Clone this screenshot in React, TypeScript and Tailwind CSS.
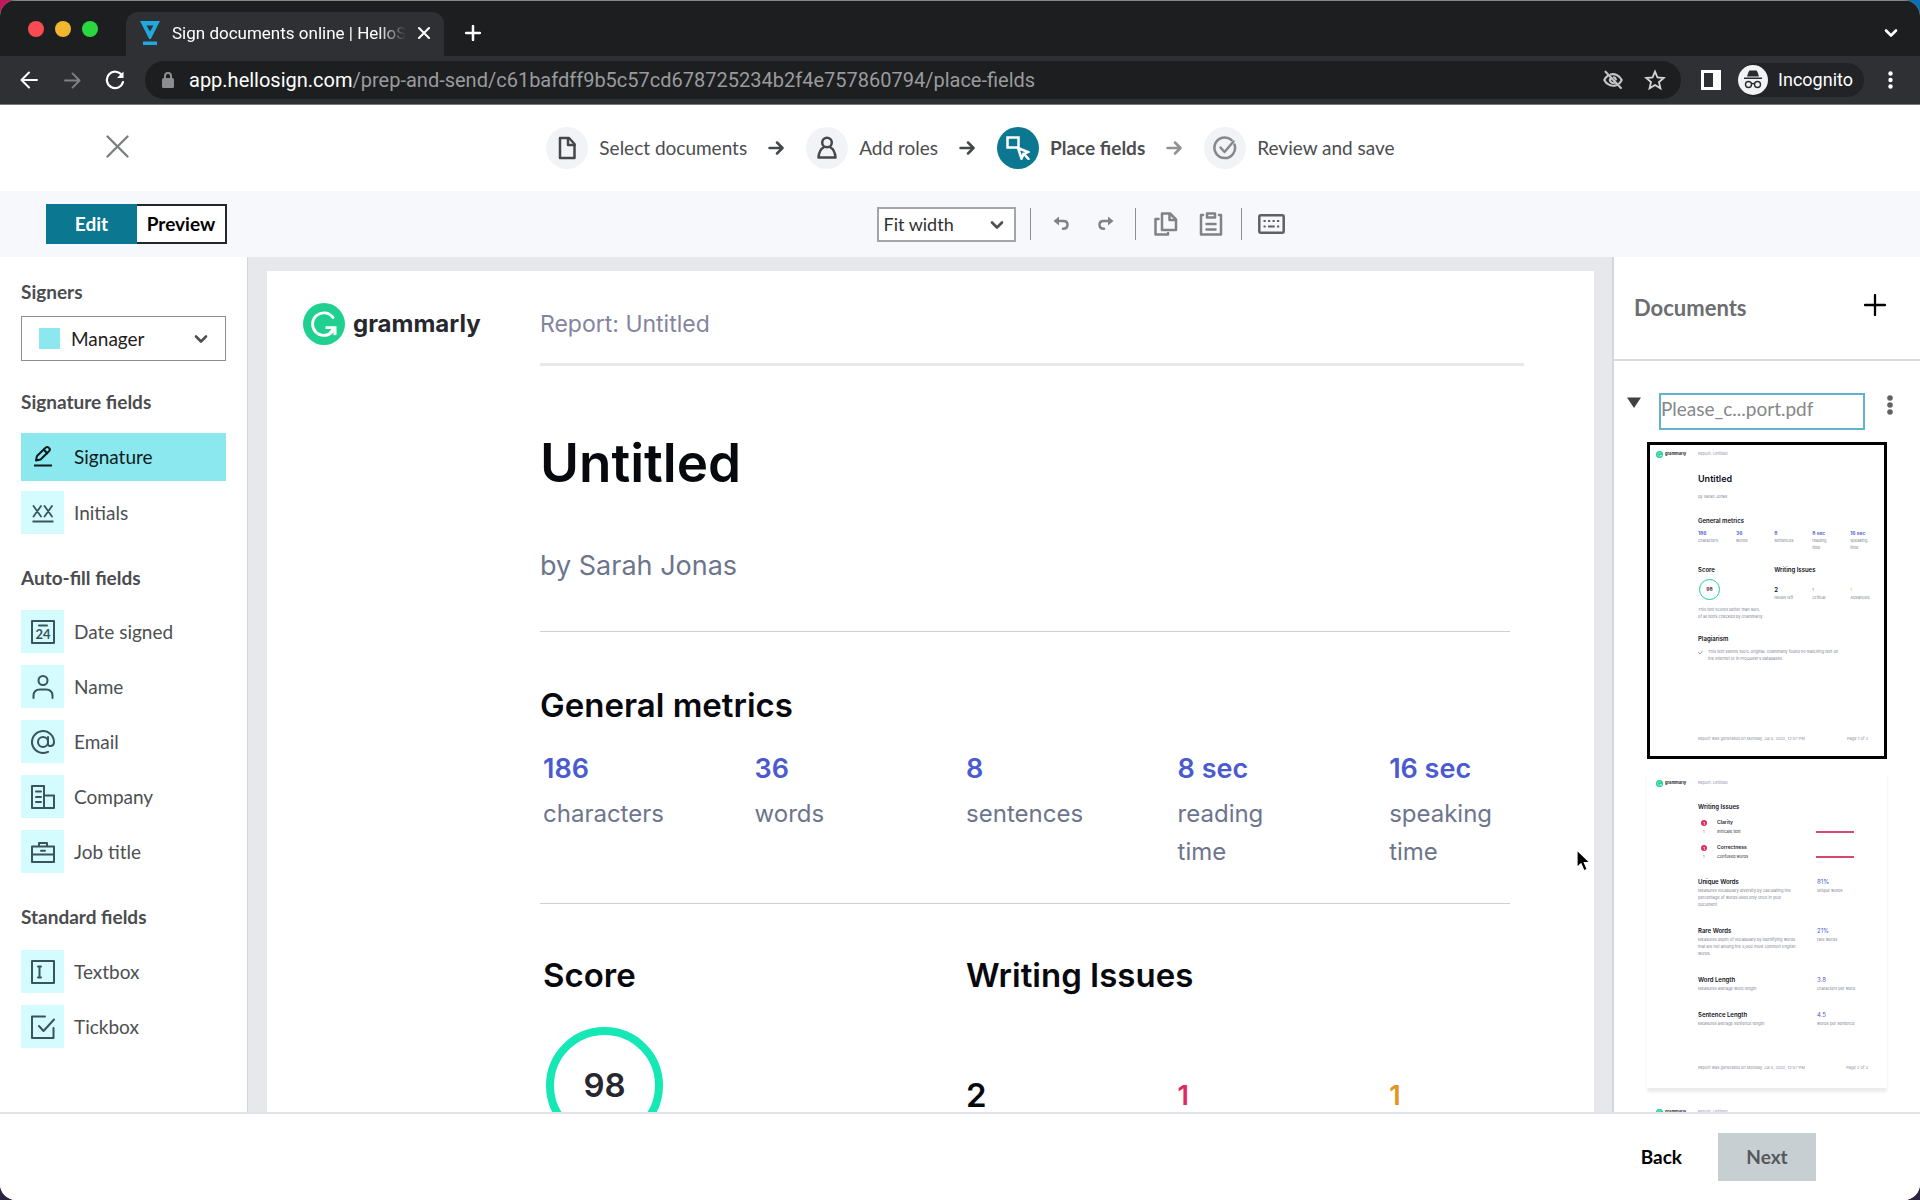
import type { ReactNode } from "react";

/* ---------- icons ---------- */

type SvgProps = {
  size?: number;
  box?: number;
  stroke?: number;
  className?: string;
  children: ReactNode;
};

function Svg({ size = 24, box = 24, stroke = 2, className = "", children }: SvgProps) {
  return (
    <svg
      width={size}
      height={size}
      viewBox={`0 0 ${box} ${box}`}
      fill="none"
      stroke="currentColor"
      strokeWidth={stroke}
      strokeLinecap="round"
      strokeLinejoin="round"
      className={`shrink-0 ${className}`}
      aria-hidden="true"
    >
      {children}
    </svg>
  );
}

const SignatureIcon = () => (
  <Svg stroke={2}>
    <path d="M3 20.5h18" strokeLinecap="butt" />
    <path d="M5 15.5l1-4.6L14.8 2.6c.9-.8 2-.8 2.8 0l.6.6c.9.9.8 2 0 2.800L9.600 14.500z" />
    <path d="M12.800 4.800l3.400 3.400" />
  </Svg>
);

const InitialsIcon = () => (
  <Svg stroke={2}>
    <path d="M1.500 20.500h21" strokeLinecap="butt" />
    <path d="M2.500 5l7.500 10.500M10 5L2.500 15.500M13.500 5l7.500 10.500M21 5l-7.500 10.500" strokeWidth="1.800" />
  </Svg>
);

const DateIcon = () => (
  <Svg stroke={2}>
    <rect x="1" y="1" width="22" height="22" />
    <path d="M8 5.500h8" />
    <text x="12" y="19" textAnchor="middle" fontSize="13" fontWeight="700" fontFamily="Lato" fill="currentColor" stroke="none">
      24
    </text>
  </Svg>
);

const NameIcon = () => (
  <Svg>
    <circle cx="12" cy="5.500" r="4.500" />
    <path d="M2.500 23v-2c0-4 2.500-6.500 6.500-6.500h6c4 0 6.500 2.500 6.500 6.500v2" />
  </Svg>
);

const EmailIcon = () => (
  <Svg>
    <circle cx="12" cy="12" r="5" />
    <path d="M17 7v7c0 3 6 3 6-2A11 11 0 1 0 17 21.800" />
  </Svg>
);

const CompanyIcon = () => (
  <Svg>
    <path d="M1 1h12v22H1zM13 10.500h10V23H13" />
    <path d="M5 6.500h5M5 12h5M5 17h5" />
  </Svg>
);

const JobIcon = () => (
  <Svg>
    <path d="M1 6.500h22v15.500H1zM1 14.500h22M8 6V3h8v3M10 10.800h4" />
  </Svg>
);

const TextboxIcon = () => (
  <Svg>
    <rect x="1" y="1" width="22" height="22" />
    <path d="M8.500 7v10M7 6.500h3M7 17.500h3" />
  </Svg>
);

const TickboxIcon = () => (
  <Svg>
    <path d="M14 1.500H1V23h21.500V13" />
    <path d="M8 11l4.500 5L23 4.500" />
  </Svg>
);

const ArrowRight = ({ className = "" }) => (
  <Svg size={16} box={16} stroke={2.500} className={className}>
    <path d="M1.500 8h13M9 2.500L14.500 8 9 13.500" />
  </Svg>
);

const ChevronDown = ({ size = 14, className = "" }) => (
  <Svg size={size} box={14} stroke={2.600} className={className}>
    <path d="M2 4.500l5 5 5-5" />
  </Svg>
);

function GrammarlyMark({ className = "" }) {
  return (
    <svg viewBox="0 0 42 42" className={`shrink-0 ${className}`} aria-hidden="true">
      <circle cx="21" cy="21" r="21" fill="#1fd091" />
      <path
        d="M30 14.500A11.300 11.300 0 1 0 29 29"
        fill="none"
        stroke="#fff"
        strokeWidth="2.800"
        strokeLinecap="round"
      />
      <path d="M22.500 23.300h11v8.800l-3 .2v-3.400l-3.600 3.200-1.800-2 3.500-4h-6.100z" fill="#fff" />
    </svg>
  );
}

/* ---------- browser chrome ---------- */

function BrowserChrome() {
  return (
    <div className="border-t border-[#85878a] bg-[#1d1e20] font-['Roboto',sans-serif] text-white">
      <div className="flex h-[55px] items-center pr-[22px] pl-7">
        <div className="flex gap-[11px]">
          <span className="h-4 w-4 rounded-full bg-[#fb4b52]" />
          <span className="h-4 w-4 rounded-full bg-[#f3b62f]" />
          <span className="h-4 w-4 rounded-full bg-[#2bd741]" />
        </div>
        <div className="ml-7 flex h-[44px] w-[318px] items-center self-end rounded-t-xl bg-[#2f3034] px-[14px] pb-[2px]">
          <svg width="20" height="24" viewBox="0 0 20 24" className="shrink-0" aria-hidden="true">
            <path d="M0 0h20L10.800 18h-1.600zM6.500 4.500L10 10.500l3.500-6z" fill="#20a9dc" fillRule="evenodd" />
            <path d="M3 20.500h14v3.500H3z" fill="#20a9dc" />
          </svg>
          <span className="ml-3 flex-1 overflow-hidden text-[17px] leading-6 whitespace-nowrap [mask-image:linear-gradient(to_right,#000_88%,transparent)]">
            Sign documents online | HelloSign
          </span>
          <button type="button" aria-label="Close tab" className="ml-3">
            <Svg size={12} box={12}>
              <path d="M1 1l10 10M11 1L1 11" />
            </Svg>
          </button>
        </div>
        <button type="button" aria-label="New tab" className="mt-2 ml-[21px]">
          <Svg size={16} box={16} stroke={2.500}>
            <path d="M8 1v14M1 8h14" />
          </Svg>
        </button>
        <button type="button" aria-label="Search tabs" className="mt-2 ml-auto">
          <ChevronDown />
        </button>
      </div>

      <div className="flex h-[49px] items-center border-b border-[#77787b] bg-[#2f3034] pr-[27px] pl-5">
        <button type="button" aria-label="Back in history">
          <Svg size={18} box={18}>
            <path d="M17 9H2M9 1.500L1.500 9 9 16.500" />
          </Svg>
        </button>
        <button type="button" aria-label="Forward in history" className="ml-[26px] text-[#7e8083]">
          <Svg size={17} box={18}>
            <path d="M1 9h15M9 1.500L16.500 9 9 16.500" />
          </Svg>
        </button>
        <button type="button" aria-label="Reload" className="ml-6">
          <Svg size={20} box={20} stroke={2.200}>
            <path d="M17 5.500A8.200 8.200 0 1 0 18 12" />
            <path d="M18.500 1.500v6.500h-6.500z" fill="currentColor" stroke="none" />
          </Svg>
        </button>
        <div className="ml-5 flex h-[38px] flex-1 items-center rounded-full bg-[#1d1e20] pr-4 pl-[17px]">
          <svg width="12" height="16" viewBox="0 0 12 16" className="shrink-0" aria-hidden="true">
            <rect y="6" width="12" height="10" rx="1.500" fill="#8b8d90" />
            <path d="M3 6V4a3 3 0 0 1 6 0v2" fill="none" stroke="#8b8d90" strokeWidth="2" />
          </svg>
          <span className="ml-[15px] text-xl leading-6 whitespace-nowrap">
            app.hellosign.com
            <span className="text-[#9a9b9e]">
              /prep-and-send/c61bafdff9b5c57cd678725234b2f4e757860794/place-fields
            </span>
          </span>
          <button type="button" aria-label="Third-party cookies blocked" className="ml-auto text-[#c4c6c9]">
            <Svg size={20} stroke={2.500}>
              <path d="M9 5.300A12 12 0 0 1 22.500 12a14 14 0 0 1-3.200 4.300M6 6.800A13 13 0 0 0 1.500 12 12 12 0 0 0 16 18.300" />
              <path d="M9.500 9.500a3.500 3.500 0 0 0 5 5M3 2l18.500 19.500M13 8.700a3.500 3.500 0 0 1 2.500 2.600" />
            </Svg>
          </button>
          <button type="button" aria-label="Bookmark this page" className="ml-[22px] text-[#d3d5d8]">
            <Svg size={20} stroke={2.200} className="overflow-visible">
              <path
                d="M12 2l3 7 7.500.6-5.700 5 1.700 7.400L12 18l-6.500 4 1.700-7.400-5.700-5L9 9z"
                strokeLinejoin="miter"
              />
            </Svg>
          </button>
        </div>
        <button type="button" aria-label="Side panel" className="ml-5">
          <Svg size={20} box={20} stroke={3}>
            <path d="M1.500 1.500h17v17h-17z" strokeLinejoin="miter" />
            <path d="M12 1h7v18h-7z" fill="currentColor" stroke="none" />
          </Svg>
        </button>
        <button type="button" className="ml-[17px] flex h-[34px] items-center rounded-full bg-[#222326] pr-[11px]">
          <svg width="30" height="30" viewBox="0 0 30 30" aria-hidden="true">
            <circle cx="15" cy="15" r="15" fill="#f1f3f4" />
            <path d="M10.500 7l1-1.500h7l1 1.500 1.500 4.500H9zM6 12.500h18v1.500H6z" fill="#2a2b2e" />
            <g fill="none" stroke="#2a2b2e" strokeWidth="1.400">
              <circle cx="10.500" cy="19.500" r="3" />
              <circle cx="19.500" cy="19.500" r="3" />
              <path d="M13.500 19c1-.7 2-.7 3 0" />
            </g>
          </svg>
          <span className="ml-[10px] text-[18px] leading-6">Incognito</span>
        </button>
        <button type="button" aria-label="Browser menu" className="ml-6">
          <svg width="5" height="18" viewBox="0 0 5 18" fill="#fff" aria-hidden="true">
            <circle cx="2.500" cy="2.500" r="2.200" />
            <circle cx="2.500" cy="9" r="2.200" />
            <circle cx="2.500" cy="15.500" r="2.200" />
          </svg>
        </button>
      </div>
    </div>
  );
}

/* ---------- wizard header ---------- */

const steps = [
  {
    label: "Select documents",
    icon: (
      <Svg stroke={2.500}>
        <path d="M5 2h9l5.500 6v14H5z" />
        <path d="M13 2.500V9h6.500" />
      </Svg>
    ),
  },
  {
    label: "Add roles",
    icon: (
      <Svg stroke={2.500}>
        <circle cx="12" cy="6.500" r="4.800" />
        <path d="M8.500 11.500C5.500 13 4 15.500 3.500 21.500h17c-.5-6-2-8.500-5-10" />
      </Svg>
    ),
  },
  {
    label: "Place fields",
    active: true,
    icon: (
      <Svg stroke={2.500}>
        <path d="M1.500 1.500h11v10h-11z" strokeLinejoin="miter" />
        <path d="M12 12l10 4-4.200 1.800L22.500 23M12 12l3.500 10.500 2.300-4.700" strokeLinejoin="miter" />
      </Svg>
    ),
  },
  {
    label: "Review and save",
    muted: true,
    icon: (
      <Svg stroke={2.500}>
        <path d="M21.500 8.500A10.300 10.300 0 1 1 18.500 4" />
        <path d="M7.500 11.500l4 4.500L20.500 5.500" />
      </Svg>
    ),
  },
];

function WizardHeader() {
  return (
    <header className="flex h-[86px] shrink-0 items-center bg-white pl-[106px]">
      <button type="button" aria-label="Close" className="mb-1 text-[#7b7d80]">
        <Svg size={23} box={23} stroke={2.300}>
          <path d="M1.500 1.500l20 20M21.500 1.500l-20 20" />
        </Svg>
      </button>
      <nav className="flex flex-1 justify-center pr-[108px]" aria-label="Progress">
        <ol className="flex items-center">
          {steps.map((step, i) => (
            <li key={step.label} className="flex items-center">
              {i > 0 && (
                <ArrowRight className={`mr-[22px] ml-[21px] ${step.muted ? "text-[#8f9194]" : "text-[#45474a]"}`} />
              )}
              <span
                className={`grid h-[42px] w-[42px] place-items-center rounded-full ${
                  step.active
                    ? "bg-[#0b7790] text-white"
                    : step.muted
                      ? "bg-[#f2f3f6] text-[#85878a]"
                      : "bg-[#f2f3f6] text-[#45474a]"
                }`}
              >
                {step.icon}
              </span>
              <span className={`ml-[11px] text-[19px] leading-6 text-[#4b4d50] ${step.active ? "font-bold" : ""}`}>
                {step.label}
              </span>
            </li>
          ))}
        </ol>
      </nav>
    </header>
  );
}

function Toolbar() {
  return (
    <div className="flex h-[66px] shrink-0 items-center bg-[#f7f8fb] pl-[46px]">
      <div className="flex h-10 text-[19px] leading-6 font-bold">
        <button type="button" className="w-[91px] bg-[#0b7790] text-white">
          Edit
        </button>
        <button type="button" className="w-[90px] border-2 border-l-0 border-[#26272a] bg-white text-black">
          Preview
        </button>
      </div>
      <div className="flex flex-1 items-center justify-center pl-[14px] text-[#808285]">
        <div className="relative">
          <select
            aria-label="Zoom"
            className="h-[35px] w-[139px] appearance-none border-2 border-[#a3a5a8] bg-white pl-[5px] text-[18px] leading-6 text-[#2f3033]"
          >
            <option>Fit width</option>
          </select>
          <ChevronDown className="pointer-events-none absolute top-[11px] right-3 text-[#4d4f52]" />
        </div>
        <span className="ml-[14px] h-8 w-px bg-[#8d8f92]" />
        <button type="button" aria-label="Undo" className="ml-[22px]">
          <Svg size={16} box={16} stroke={2.500}>
            <path d="M4 5h6.500c2.500 0 4 1.500 4 3.800s-1.700 4-4.500 4" />
            <path d="M6 .5v9L.5 5z" fill="currentColor" stroke="none" />
          </Svg>
        </button>
        <button type="button" aria-label="Redo" className="ml-[29px]">
          <Svg size={16} box={16} stroke={2.500}>
            <path d="M12 5H5.500c-2.500 0-4 1.500-4 3.800s1.700 4 4.500 4" />
            <path d="M10 .5v9L15.500 5z" fill="currentColor" stroke="none" />
          </Svg>
        </button>
        <span className="ml-[21px] h-8 w-px bg-[#8d8f92]" />
        <button type="button" aria-label="Copy" className="ml-[18px]">
          <Svg stroke={2.500}>
            <path d="M8 1.500h8l6 6V18H8z" />
            <path d="M15.500 2v6H22M4.500 7H1.500v15.500h12.500V21" />
          </Svg>
        </button>
        <button type="button" aria-label="Paste" className="ml-[21px]">
          <Svg stroke={2.500}>
            <path d="M4 3H2v19.500h20V3h-2M8 1.500h8v4H8zM7.500 12h9M7.500 17.500h9" />
          </Svg>
        </button>
        <span className="ml-[18px] h-8 w-px bg-[#8d8f92]" />
        <button type="button" aria-label="Keyboard shortcuts" className="ml-4 text-[#5f6164]">
          <svg width="27" height="20" viewBox="0 0 27 20" fill="none" stroke="currentColor" strokeWidth="2.500" aria-hidden="true">
            <rect x="1.300" y="1.300" width="24.400" height="17.400" rx="1.500" />
            <path
              d="M5.500 7h2.200M10 7h2.200M14.500 7h2.200M19 7h2.200M5.500 12.500h2.200M10 12.500h6.700M19 12.500h2.200"
              strokeWidth="2"
            />
          </svg>
        </button>
      </div>
    </div>
  );
}

/* ---------- field sidebar ---------- */

const autoFillFields = [
  { label: "Date signed", icon: <DateIcon /> },
  { label: "Name", icon: <NameIcon /> },
  { label: "Email", icon: <EmailIcon /> },
  { label: "Company", icon: <CompanyIcon /> },
  { label: "Job title", icon: <JobIcon /> },
];

const standardFields = [
  { label: "Textbox", icon: <TextboxIcon /> },
  { label: "Tickbox", icon: <TickboxIcon /> },
];

function FieldButton({ label, icon }: { label: string; icon: ReactNode }) {
  return (
    <button type="button" className="flex h-[43px] items-center text-left text-[#4d4f52]">
      <span className="grid h-[43px] w-[43px] place-items-center bg-[#d4fbfe] text-[#3a545b]">{icon}</span>
      <span className="ml-[10px]">{label}</span>
    </button>
  );
}

function FieldHeading({ children, className = "" }: { children: ReactNode; className?: string }) {
  return <h2 className={`font-bold text-[#4a4c4f] ${className}`}>{children}</h2>;
}

function FieldSidebar() {
  return (
    <aside className="w-[247px] shrink-0 overflow-hidden bg-white px-[21px] pt-[23px] text-[19px] leading-6">
      <FieldHeading>Signers</FieldHeading>
      <div className="relative mt-3">
        <span className="pointer-events-none absolute top-3 left-[18px] h-[21px] w-[21px] bg-[#8ae8ee]" />
        <select
          aria-label="Signer"
          className="h-[45px] w-full appearance-none border border-[#8b8d90] bg-white pl-[49px] text-[#1f2023]"
        >
          <option>Manager</option>
        </select>
        <ChevronDown className="pointer-events-none absolute top-4 right-[18px] text-[#4d4f52]" />
      </div>

      <FieldHeading className="mt-[29px]">Signature fields</FieldHeading>
      <div className="mt-[19px] flex flex-col gap-[10px]">
        <button type="button" className="flex h-12 items-center bg-[#8ae8ee] pl-[10px] text-left text-[#0d1a1d]">
          <SignatureIcon />
          <span className="ml-[19px]">Signature</span>
        </button>
        <FieldButton label="Initials" icon={<InitialsIcon />} />
      </div>

      <FieldHeading className="mt-8">Auto-fill fields</FieldHeading>
      <div className="mt-5 flex flex-col gap-3">
        {autoFillFields.map((field) => (
          <FieldButton key={field.label} {...field} />
        ))}
      </div>

      <FieldHeading className="mt-8">Standard fields</FieldHeading>
      <div className="mt-[21px] flex flex-col gap-3">
        {standardFields.map((field) => (
          <FieldButton key={field.label} {...field} />
        ))}
      </div>
    </aside>
  );
}

/* ---------- document canvas ---------- */

const metrics = [
  { value: "186", label: "characters" },
  { value: "36", label: "words" },
  { value: "8", label: "sentences" },
  { value: "8 sec", label: "reading time" },
  { value: "16 sec", label: "speaking time" },
];

function ReportPage() {
  return (
    <article className="mt-[14px] mr-[18px] ml-[19px] flex-1 bg-white font-['Inter',sans-serif] text-[#08090f]">
      <header className="flex pt-8 pr-[70px] pl-9">
        <div className="flex h-[42px] w-[237px] shrink-0 items-center gap-2">
          <GrammarlyMark className="h-[42px] w-[42px]" />
          <span className="text-[24px] leading-8 font-bold text-[#27282f]">grammarly</span>
        </div>
        <p className="h-[63px] flex-1 border-b-[3px] border-[#e9e9ed] text-[23px] leading-[42px] text-[#8384a0]">
          Report: Untitled
        </p>
      </header>

      <div className="mr-[84px] ml-[273px]">
        <h1 className="mt-[65px] text-[53px] leading-[64px] font-semibold">Untitled</h1>
        <p className="mt-[51px] text-[27px] leading-10 text-[#6d758d]">by Sarah Jonas</p>

        <section className="mt-[45px] border-t border-[#cfd0d6] pt-[53px]">
          <h2 className="text-[33px] leading-10 font-semibold">General metrics</h2>
          <dl className="mt-6 grid grid-cols-[7fr_7fr_7fr_7fr_4fr] pl-[3px]">
            {metrics.map((m) => (
              <div key={m.value} className="flex flex-col-reverse justify-end">
                <dt className="mt-[6px] max-w-[132px] text-[24px] leading-[38px] text-[#6d758d]">{m.label}</dt>
                <dd className="text-[27px] leading-10 font-semibold whitespace-nowrap text-[#4a5ad0]">{m.value}</dd>
              </div>
            ))}
          </dl>
        </section>

        <section className="mt-8 grid grid-cols-[7fr_7fr_7fr_7fr_4fr] border-t border-[#cfd0d6] pt-[51px] pl-[3px]">
          <div className="col-span-2">
            <h2 className="text-[33px] leading-10 font-semibold">Score</h2>
            <div className="mt-8 ml-[3px] grid h-[117px] w-[117px] place-items-center rounded-full border-8 border-[#15e8b5] text-[33px] font-semibold text-[#27282f]">
              98
            </div>
          </div>
          <div className="col-span-3 grid grid-cols-[7fr_7fr_4fr] content-start">
            <h2 className="col-span-3 text-[33px] leading-10 font-semibold">Writing Issues</h2>
            <p className="mt-20 text-[33px] leading-10 font-semibold">2</p>
            <p className="mt-20 text-[27px] leading-[42px] font-semibold text-[#de2a5c]">1</p>
            <p className="mt-20 text-[27px] leading-[42px] font-semibold text-[#e4931f]">1</p>
          </div>
        </section>
      </div>
    </article>
  );
}

function MousePointer() {
  return (
    <svg
      width="16"
      height="24"
      viewBox="0 0 16 24"
      className="absolute top-[592px] right-[20px]"
      aria-hidden="true"
    >
      <path d="M1 1v17.500l4-3.800 3 7 3.200-1.400-2.900-6.800H14z" fill="#000" stroke="#fff" strokeWidth="1.200" />
    </svg>
  );
}

/* ---------- page thumbnails ---------- */

function ThumbHeader() {
  return (
    <div className="flex h-[18px] items-center pl-[6px] text-[4px] leading-[6px]">
      <GrammarlyMark className="h-[7px] w-[7px]" />
      <span className="ml-[2px] w-[33px] font-bold text-[#27282f]">grammarly</span>
      <span className="text-[#8d8eab]">Report: Untitled</span>
    </div>
  );
}

function ThumbFooter({ page }: { page: number }) {
  return (
    <p className="mt-auto mb-[14px] flex justify-between pr-4 pl-12 text-[4px] leading-[6px] text-[#8a8ca0]">
      <span>Report was generated on Monday, Jul 5, 2022, 12:57 PM</span>
      <span>Page {page} of 3</span>
    </p>
  );
}

function ThumbFirstPage() {
  return (
    <>
      <ThumbHeader />
      <div className="pr-3 pl-12 text-[4px] leading-[7px] text-[#7d8296]">
        <p className="mt-[10px] text-[9px] leading-3 font-semibold text-[#0e101a]">Untitled</p>
        <p className="mt-2">by Sarah Jonas</p>
        <p className="mt-[17px] text-[6px] leading-2 font-semibold text-[#0e101a]">General metrics</p>
        <div className="mt-1 grid grid-cols-[7fr_7fr_7fr_7fr_4fr]">
          {metrics.map((m) => (
            <div key={m.value}>
              <p className="text-[5px] leading-2 font-semibold whitespace-nowrap text-[#4a5ad0]">{m.value}</p>
              <p className="max-w-[23px]">{m.label}</p>
            </div>
          ))}
        </div>
        <div className="mt-[15px] grid grid-cols-[7fr_7fr_7fr_7fr_4fr]">
          <div className="col-span-2">
            <p className="text-[6px] leading-2 font-semibold text-[#0e101a]">Score</p>
            <p className="mt-[5px] ml-px grid h-[21px] w-[21px] place-items-center rounded-full border border-[#1fd091] text-[5px] font-semibold text-[#27282f]">
              98
            </p>
            <p className="mt-[6px] whitespace-nowrap">
              This text scores better than 98%
              <br />
              of all texts checked by Grammarly.
            </p>
          </div>
          <div className="col-span-3 grid grid-cols-[7fr_7fr_4fr] content-start">
            <p className="col-span-3 mb-3 text-[6px] leading-2 font-semibold text-[#0e101a]">Writing Issues</p>
            <p className="text-[6px] leading-2 font-semibold text-[#0e101a]">2</p>
            <p className="leading-2 text-[#de2a5c]">1</p>
            <p className="leading-2 text-[#e4931f]">1</p>
            <p>Issues left</p>
            <p>Critical</p>
            <p>Advanced</p>
          </div>
        </div>
        <p className="mt-[15px] text-[6px] leading-2 font-semibold text-[#0e101a]">Plagiarism</p>
        <div className="mt-[5px] flex gap-[5px] whitespace-nowrap">
          <Svg size={5} box={10} stroke={1.500} className="mt-[2px]">
            <path d="M1 5l3 3 5-6" />
          </Svg>
          <p>
            This text seems 100% original. Grammarly found no matching text on
            <br />
            the Internet or in ProQuest's databases.
          </p>
        </div>
      </div>
      <ThumbFooter page={1} />
    </>
  );
}

const issues = [
  { group: "Clarity", name: "Intricate text" },
  { group: "Correctness", name: "Confused words" },
];

const vocabulary = [
  {
    title: "Unique Words",
    value: "81%",
    unit: "unique words",
    lines: ["Measures vocabulary diversity by calculating the", "percentage of words used only once in your", "document"],
  },
  {
    title: "Rare Words",
    value: "21%",
    unit: "rare words",
    lines: ["Measures depth of vocabulary by identifying words", "that are not among the 5,000 most common English", "words."],
  },
  { title: "Word Length", value: "3.8", unit: "characters per word", lines: ["Measures average word length"] },
  { title: "Sentence Length", value: "4.5", unit: "words per sentence", lines: ["Measures average sentence length"] },
];

function ThumbSecondPage() {
  return (
    <>
      <ThumbHeader />
      <div className="pr-4 pl-12 text-[4px] leading-[7px] text-[#7d8296]">
        <p className="mt-[11px] text-[6px] leading-2 font-semibold text-[#0e101a]">Writing Issues</p>
        {issues.map((issue) => (
          <div key={issue.group} className="mt-[7px] grid grid-cols-[19px_1fr_52px] items-center text-[#27282f]">
            <span className="ml-[3px] grid h-[6px] w-[6px] place-items-center rounded-full bg-[#de2a5c] font-bold text-white">
              1
            </span>
            <span className="col-span-2 text-[5px] leading-[9px] font-semibold">{issue.group}</span>
            <span className="ml-[5px] text-[#de2a5c]">1</span>
            <span className="leading-[9px]">{issue.name}</span>
            <span className="h-[2px] w-[38px] bg-[#d6496c]" />
          </div>
        ))}
        <div className="mt-[15px]">
          {vocabulary.map((item) => (
            <div key={item.title} className="mb-[17px] grid grid-cols-[119px_1fr]">
              <p className="text-[6px] leading-[11px] font-semibold text-[#0e101a]">{item.title}</p>
              <p className="text-[6px] leading-[11px] text-[#4a5ad0]">{item.value}</p>
              <p className="whitespace-nowrap">
                {item.lines.map((line) => (
                  <span key={line} className="block">
                    {line}
                  </span>
                ))}
              </p>
              <p>{item.unit}</p>
            </div>
          ))}
        </div>
      </div>
      <ThumbFooter page={2} />
    </>
  );
}

function DocumentsPanel() {
  return (
    <aside className="flex w-[308px] shrink-0 flex-col overflow-hidden border-l-2 border-[#d5d6da] bg-white">
      <div className="flex h-[104px] shrink-0 items-center justify-between border-b-2 border-[#dadbde] pr-[34px] pl-5">
        <h2 className="text-[22px] leading-6 font-bold text-[#6b6d70]">Documents</h2>
        <button type="button" aria-label="Add document" className="mb-[6px] text-black">
          <Svg size={22} box={22} stroke={2.300}>
            <path d="M11 1v20M1 11h20" />
          </Svg>
        </button>
      </div>

      <div className="mt-8 flex shrink-0 items-start pl-[13px]">
        <button type="button" aria-label="Collapse document" className="mt-1 text-[#3f4144]">
          <svg width="14" height="11" viewBox="0 0 14 11" aria-hidden="true">
            <path d="M0 .5h14L7 11z" fill="currentColor" />
          </svg>
        </button>
        <input
          aria-label="Document name"
          defaultValue="Please_c...port.pdf"
          className="ml-[18px] h-[37px] w-[206px] border-2 border-[#62b1cf] pb-[6px] text-[19px] leading-6 text-[#85878a] outline-none"
        />
        <button type="button" aria-label="Document menu" className="mt-[2px] ml-[22px] text-[#606265]">
          <svg width="6" height="20" viewBox="0 0 6 20" fill="currentColor" aria-hidden="true">
            <circle cx="3" cy="3" r="2.800" />
            <circle cx="3" cy="10" r="2.800" />
            <circle cx="3" cy="17" r="2.800" />
          </svg>
        </button>
      </div>

      <div className="mt-3 ml-[33px] flex flex-col gap-3 font-['Inter',sans-serif]">
        <div className="flex h-[317px] w-60 shrink-0 flex-col border-[3px] border-black">
          <ThumbFirstPage />
        </div>
        <div className="flex h-[317px] w-60 shrink-0 flex-col border-[3px] border-transparent shadow-[0_4px_3px_#ececee]">
          <ThumbSecondPage />
        </div>
        <div className="flex h-[317px] w-60 shrink-0 flex-col border-[3px] border-transparent">
          <ThumbHeader />
        </div>
      </div>
    </aside>
  );
}

export default function App() {
  return (
    <div className="h-screen bg-[#2c2440] bg-[linear-gradient(to_right,#c2185b,#0b6fb0)] bg-[length:100%_50%] bg-no-repeat">
      <div className="flex h-full flex-col overflow-hidden rounded-2xl bg-white font-['Lato',sans-serif]">
        <BrowserChrome />
        <WizardHeader />
        <Toolbar />
        <main className="flex min-h-0 flex-1">
          <FieldSidebar />
          <div className="relative flex min-w-0 flex-1 overflow-hidden border-l border-[#d5d6da] bg-[#e7e8ec]">
            <ReportPage />
            <MousePointer />
          </div>
          <DocumentsPanel />
        </main>
        <footer className="flex h-[88px] shrink-0 items-center justify-end gap-9 border-t-2 border-[#e2e3e6] bg-white pr-[104px] text-[19px] leading-6 font-bold">
          <button type="button" className="text-black">
            Back
          </button>
          <button type="button" className="h-12 w-[98px] bg-[#c7cfd2] text-[#55585b]">
            Next
          </button>
        </footer>
      </div>
    </div>
  );
}
